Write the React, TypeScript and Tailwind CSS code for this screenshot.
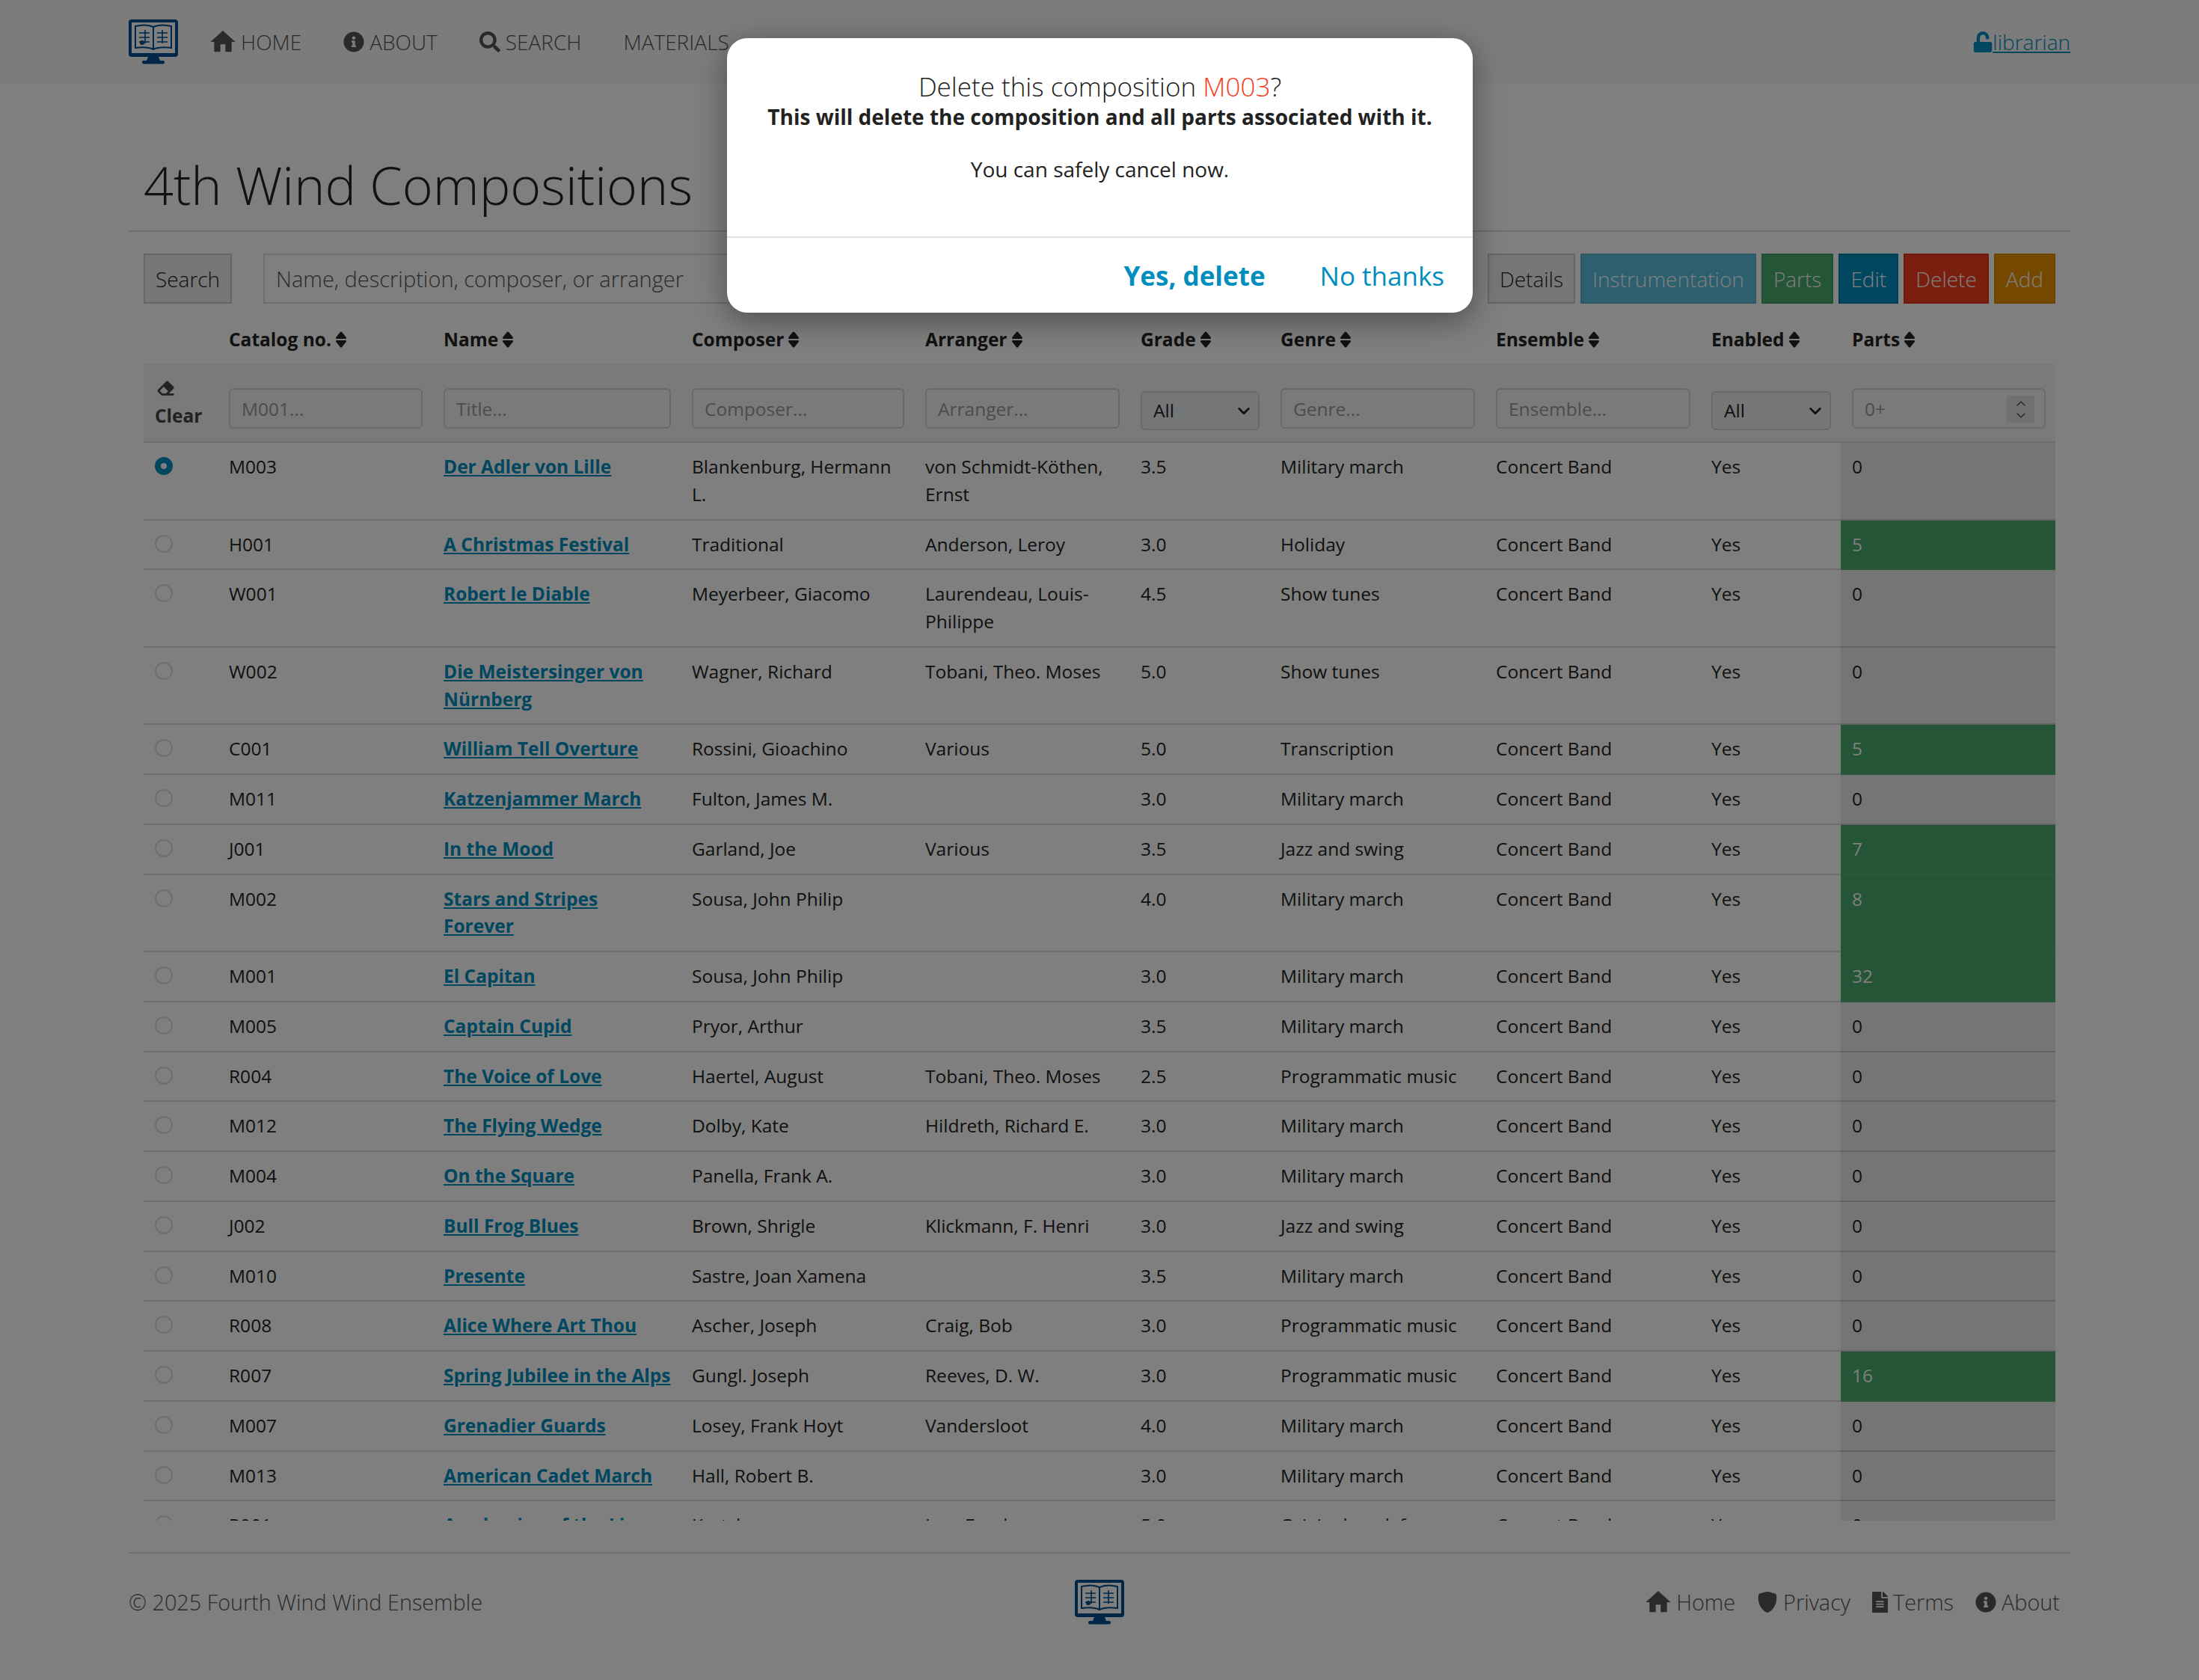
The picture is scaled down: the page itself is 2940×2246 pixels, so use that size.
import { BsShieldFill, BsChevronDown, BsChevronUp } from "react-icons/bs";
import { FaEraser, FaFileAlt, FaInfoCircle, FaSearch, FaUnlock } from "react-icons/fa";
import { MdHome } from "react-icons/md";

interface Row {
  no: string;
  name: string;
  composer: string;
  arranger: string;
  grade: string;
  genre: string;
  parts: number;
}

const rows: Row[] = [
  { no: "M003", name: "Der Adler von Lille", composer: "Blankenburg, Hermann L.", arranger: "von Schmidt-Köthen, Ernst", grade: "3.5", genre: "Military march", parts: 0 },
  { no: "H001", name: "A Christmas Festival", composer: "Traditional", arranger: "Anderson, Leroy", grade: "3.0", genre: "Holiday", parts: 5 },
  { no: "W001", name: "Robert le Diable", composer: "Meyerbeer, Giacomo", arranger: "Laurendeau, Louis-Philippe", grade: "4.5", genre: "Show tunes", parts: 0 },
  { no: "W002", name: "Die Meistersinger von Nürnberg", composer: "Wagner, Richard", arranger: "Tobani, Theo. Moses", grade: "5.0", genre: "Show tunes", parts: 0 },
  { no: "C001", name: "William Tell Overture", composer: "Rossini, Gioachino", arranger: "Various", grade: "5.0", genre: "Transcription", parts: 5 },
  { no: "M011", name: "Katzenjammer March", composer: "Fulton, James M.", arranger: "", grade: "3.0", genre: "Military march", parts: 0 },
  { no: "J001", name: "In the Mood", composer: "Garland, Joe", arranger: "Various", grade: "3.5", genre: "Jazz and swing", parts: 7 },
  { no: "M002", name: "Stars and Stripes Forever", composer: "Sousa, John Philip", arranger: "", grade: "4.0", genre: "Military march", parts: 8 },
  { no: "M001", name: "El Capitan", composer: "Sousa, John Philip", arranger: "", grade: "3.0", genre: "Military march", parts: 32 },
  { no: "M005", name: "Captain Cupid", composer: "Pryor, Arthur", arranger: "", grade: "3.5", genre: "Military march", parts: 0 },
  { no: "R004", name: "The Voice of Love", composer: "Haertel, August", arranger: "Tobani, Theo. Moses", grade: "2.5", genre: "Programmatic music", parts: 0 },
  { no: "M012", name: "The Flying Wedge", composer: "Dolby, Kate", arranger: "Hildreth, Richard E.", grade: "3.0", genre: "Military march", parts: 0 },
  { no: "M004", name: "On the Square", composer: "Panella, Frank A.", arranger: "", grade: "3.0", genre: "Military march", parts: 0 },
  { no: "J002", name: "Bull Frog Blues", composer: "Brown, Shrigle", arranger: "Klickmann, F. Henri", grade: "3.0", genre: "Jazz and swing", parts: 0 },
  { no: "M010", name: "Presente", composer: "Sastre, Joan Xamena", arranger: "", grade: "3.5", genre: "Military march", parts: 0 },
  { no: "R008", name: "Alice Where Art Thou", composer: "Ascher, Joseph", arranger: "Craig, Bob", grade: "3.0", genre: "Programmatic music", parts: 0 },
  { no: "R007", name: "Spring Jubilee in the Alps", composer: "Gungl. Joseph", arranger: "Reeves, D. W.", grade: "3.0", genre: "Programmatic music", parts: 16 },
  { no: "M007", name: "Grenadier Guards", composer: "Losey, Frank Hoyt", arranger: "Vandersloot", grade: "4.0", genre: "Military march", parts: 0 },
  { no: "M013", name: "American Cadet March", composer: "Hall, Robert B.", arranger: "", grade: "3.0", genre: "Military march", parts: 0 },
  { no: "R001", name: "Awakening of the Lion", composer: "Kretzl", arranger: "Lee, Frank", grade: "5.0", genre: "Original work for concert band", parts: 0 },
];

const headers = ["Catalog no.", "Name", "Composer", "Arranger", "Grade", "Genre", "Ensemble", "Enabled", "Parts"];

function Logo({ className }: { className: string }) {
  return (
    <svg viewBox="0 0 66 60" className={className} fill="none">
      <rect x="0" y="0" width="66" height="50" rx="4" fill="#004e8e" />
      <rect x="4" y="4" width="58" height="41" fill="#ffffff" />
      <path d="M9 9c8-2 18-2 24 1 6-3 16-3 24-1v29c-8-1-18-1-24 2-6-3-16-3-24-2z" stroke="#004e8e" strokeWidth="2" />
      <path d="M33 10v30" stroke="#004e8e" strokeWidth="2" />
      <path d="M14 18h14M14 24h14M14 30h14M22 14v18M38 18h14M38 24h14M38 30h14M45 14v18" stroke="#004e8e" strokeWidth="1.6" />
      <circle cx="18" cy="31" r="3" fill="#004e8e" />
      <path d="M26 50h14l2 5H24z" fill="#004e8e" />
      <rect x="18" y="55" width="30" height="4.5" rx="2" fill="#004e8e" />
    </svg>
  );
}

function SortIcon() {
  return (
    <svg viewBox="0 0 16 22" className="h-[22px] w-[16px]" fill="currentColor">
      <path d="M8 0.5c.5 0 .9.2 1.2.6l5.6 7c.5.7.1 1.9-.9 1.9H2.1c-1 0-1.4-1.2-.9-1.9l5.6-7c.3-.4.7-.6 1.2-.6z" />
      <path d="M8 21.5c.5 0 .9-.2 1.2-.6l5.6-7c.5-.7.1-1.9-.9-1.9H2.1c-1 0-1.4 1.2-.9 1.9l5.6 7c.3.4.7.6 1.2.6z" />
    </svg>
  );
}

function NavItem({ icon, label, textSize }: { icon?: React.ReactNode; label: string; textSize: string }) {
  return (
    <a className={`flex items-center gap-[7px] font-light text-[#555555] ${textSize}`}>
      {icon}
      {label}
    </a>
  );
}

function ActionButton({ label, className }: { label: string; className: string }) {
  return (
    <button className={`h-[67px] border-2 px-[14px] text-[28px] font-light ${className}`}>{label}</button>
  );
}

function AllSelect() {
  return (
    <div className="relative">
      <select className="h-[52px] w-full appearance-none rounded-[6px] border-2 border-[#ced4da] bg-[#e9ecef] px-[15px] text-[24.5px] font-normal">
        <option>All</option>
      </select>
      <BsChevronDown className="pointer-events-none absolute right-[12px] top-[18px] h-[17px] w-[18px] stroke-[1.5] text-[#222222]" />
    </div>
  );
}

const inputClass = "h-[54px] w-full rounded-[6px] border-2 border-[#ced4da] bg-transparent px-[15px] text-[24.5px] font-normal placeholder:text-[#999999]";
const filterCell = "pl-[15px] pr-[13px] pb-[17px] align-bottom";
const cell = "px-[15px] py-[14px]";

export default function App() {
  return (
    <div className="relative h-[2246px] w-[2940px] overflow-hidden bg-white font-['Open_Sans',sans-serif] text-[24.5px] text-[#222222]">
      <nav className="flex h-[112px] items-center bg-[#f8f8f8] px-[172px]">
        <Logo className="h-[60px] w-[66px]" />
        <div className="ml-[43px] flex gap-[56px]">
          <NavItem textSize="text-[28px]" icon={<MdHome className="mx-[-3px] h-[40px] w-[40px]" />} label="HOME" />
          <NavItem textSize="text-[28px]" icon={<FaInfoCircle className="h-[28px] w-[28px]" />} label="ABOUT" />
          <NavItem textSize="text-[28px]" icon={<FaSearch className="h-[28px] w-[28px]" />} label="SEARCH" />
          <NavItem textSize="text-[28px]" label="MATERIALS" />
        </div>
        <a className="ml-auto flex items-center text-[28px] font-light text-[#008ebe]">
          <FaUnlock className="h-[28px] w-[26px]" />
          <span className="underline">librarian</span>
        </a>
      </nav>

      <main className="mx-[172px]">
        <div className="border-b-2 border-[#dddddd] pb-[17px] pl-[20px] pt-[91px]">
          <h1 className="text-[70px] font-light leading-[88px] text-[#222222]">4th Wind Compositions</h1>
        </div>

        <div className="mt-[29px] flex px-[20px]">
          <button className="h-[67px] w-[118px] border-2 border-[#cccccc] bg-[#eeeeee] text-[28px] font-light">Search</button>
          <input className="ml-[42px] h-[67px] w-[1500px] border-2 border-[#dddddd] bg-white px-[15px] text-[29px] font-light placeholder:text-[#555555]" placeholder="Name, description, composer, or arranger" />
          <div className="ml-auto flex gap-[7px]">
            <ActionButton label="Details" className="border-[#cccccc] bg-[#eeeeee] text-[#222222]" />
            <ActionButton label="Instrumentation" className="border-[#5bb0c8] bg-[#5bc0de] text-white" />
            <ActionButton label="Parts" className="border-[#3fa060] bg-[#46aa6c] text-white" />
            <ActionButton label="Edit" className="border-[#0080aa] bg-[#008ebe] text-white" />
            <ActionButton label="Delete" className="border-[#e03818] bg-[#f43e20] text-white" />
            <ActionButton label="Add" className="border-[#d88800] bg-[#ea9400] text-white" />
          </div>
        </div>

        <div className="mx-[20px] mt-[14px] h-[1613px] overflow-hidden">
          <table className="w-[2556px] table-fixed border-collapse">
            <colgroup>
              <col className="w-[99px]" />
              <col className="w-[287px]" />
              <col className="w-[332px]" />
              <col className="w-[312px]" />
              <col className="w-[288px]" />
              <col className="w-[187px]" />
              <col className="w-[288px]" />
              <col className="w-[288px]" />
              <col className="w-[188px]" />
              <col className="w-[287px]" />
            </colgroup>
            <thead>
              <tr className="h-[66px]">
                <th />
                {headers.map((h) => (
                  <th key={h} className="px-[15px] pt-[2px] text-left font-bold">
                    <span className="inline-flex items-center gap-[5px]">
                      {h}
                      <SortIcon />
                    </span>
                  </th>
                ))}
              </tr>
              <tr className="h-[105px] border-b-2 border-[#dddddd] bg-[#f4f4f4]">
                <th className="px-[15px] pb-[16px] align-bottom text-left font-bold leading-[36px] text-[#444444]">
                  <FaEraser className="mb-[8px] ml-[2px] h-[22px] w-[25px]" />
                  Clear
                </th>
                <th className={filterCell}><input className={inputClass} placeholder="M001..." /></th>
                <th className={filterCell}><input className={inputClass} placeholder="Title..." /></th>
                <th className={filterCell}><input className={inputClass} placeholder="Composer..." /></th>
                <th className={filterCell}><input className={inputClass} placeholder="Arranger..." /></th>
                <th className="pb-[15px] pl-[15px] pr-[13px] align-bottom"><AllSelect /></th>
                <th className={filterCell}><input className={inputClass} placeholder="Genre..." /></th>
                <th className={filterCell}><input className={inputClass} placeholder="Ensemble..." /></th>
                <th className="pb-[15px] pl-[15px] pr-[13px] align-bottom"><AllSelect /></th>
                <th className={filterCell}>
                  <div className="relative">
                    <input className={inputClass} placeholder="0+" />
                    <div className="absolute right-[15px] top-[10px] flex h-[36px] w-[37px] flex-col items-center justify-center gap-[3px] bg-[#e2e2e2] text-[#555555]">
                      <BsChevronUp className="h-[13px] w-[16px] stroke-1" />
                      <BsChevronDown className="h-[13px] w-[16px] stroke-1" />
                    </div>
                  </div>
                </th>
              </tr>
            </thead>
            <tbody>
              {rows.map((row, index) => (
                <tr key={row.no} className="border-b-2 border-[#dddddd] align-top">
                  <td className={cell}>
                    {index === 0 ? (
                      <span className="mt-[5px] block h-[24px] w-[24px] rounded-full border-[8px] border-[#008ebe] bg-white" />
                    ) : (
                      <span className="mt-[5px] block h-[24px] w-[24px] rounded-full border-2 border-[#dddddd]" />
                    )}
                  </td>
                  <td className={cell}>{row.no}</td>
                  <td className="py-[14px] pl-[15px] pr-[12px] font-bold text-[#008ebe] underline">{row.name}</td>
                  <td className={cell}>{row.composer}</td>
                  <td className={cell}>{row.arranger}</td>
                  <td className={cell}>{row.grade}</td>
                  <td className={cell}>{row.genre}</td>
                  <td className={cell}>Concert Band</td>
                  <td className={cell}>Yes</td>
                  <td className={`border-b-2 ${cell} ${row.parts > 0 ? "border-[#4fb075] bg-[#46aa6c] text-white" : "border-[#c4c4c4] bg-[#ebebeb]"}`}>{row.parts}</td>
                </tr>
              ))}
            </tbody>
          </table>
        </div>

        <footer className="mt-[42px] grid grid-cols-3 items-center border-t-2 border-[#dddddd] pt-[35px] font-light text-[#555555]">
          <span className="text-[28.8px]">© 2025 Fourth Wind Wind Ensemble</span>
          <Logo className="h-[60px] w-[66px] justify-self-center" />
          <div className="flex justify-end gap-[29px] pr-[14px]">
            <NavItem textSize="text-[28.8px]" icon={<MdHome className="mx-[-3px] h-[40px] w-[40px]" />} label="Home" />
            <NavItem textSize="text-[28.8px]" icon={<BsShieldFill className="h-[28px] w-[28px]" />} label="Privacy" />
            <NavItem textSize="text-[28.8px]" icon={<FaFileAlt className="h-[28px] w-[21px]" />} label="Terms" />
            <NavItem textSize="text-[28.8px]" icon={<FaInfoCircle className="h-[28px] w-[28px]" />} label="About" />
          </div>
        </footer>
      </main>

      <div className="absolute inset-0 bg-black/50" />

      <div className="absolute left-[972px] top-[51px] w-[997px] overflow-hidden rounded-[27px] bg-white shadow-[0_10px_40px_rgba(0,0,0,0.4)]">
        <div className="h-[267px] border-b-2 border-[#dee2e6] px-[30px] pt-[39px] text-center">
          <div className="text-[35px] font-light leading-[51px]">
            Delete this composition <span className="text-[#f43e20]">M003</span>?
          </div>
          <div className="text-[28px] font-bold leading-[30px]">This will delete the composition and all parts associated with it.</div>
          <div className="mt-[35px] text-[28px] leading-[40px]">You can safely cancel now.</div>
        </div>
        <div className="flex h-[100px] items-center justify-end gap-[73px] pr-[38px] pt-[3px] text-[35px] text-[#008ebe]">
          <button className="font-bold">Yes, delete</button>
          <button className="font-normal">No thanks</button>
        </div>
      </div>
    </div>
  );
}
